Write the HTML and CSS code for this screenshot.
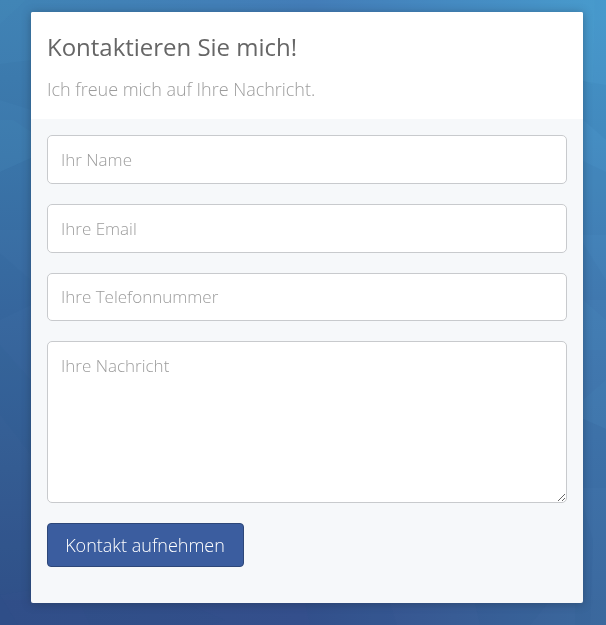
FILE: index.html
```html
<!DOCTYPE html>
<html lang="de">
<head>
<meta charset="utf-8">
<title>Kontakt</title>
<link rel="stylesheet" href="styles.css">
</head>
<body>
<svg class="backdrop" viewBox="0 0 606 625" preserveAspectRatio="none" aria-hidden="true">
  <defs>
    <linearGradient id="left" x1="0" y1="0" x2="0" y2="1">
      <stop offset="0" stop-color="#4083b5"/>
      <stop offset=".25" stop-color="#3c77ab"/>
      <stop offset=".5" stop-color="#38689f"/>
      <stop offset=".75" stop-color="#345c92"/>
      <stop offset="1" stop-color="#304e88"/>
    </linearGradient>
    <linearGradient id="right" x1="0" y1="0" x2="0" y2="1">
      <stop offset="0" stop-color="#4799cc"/>
      <stop offset=".22" stop-color="#458dc2"/>
      <stop offset=".48" stop-color="#427bb2"/>
      <stop offset=".7" stop-color="#3f73aa"/>
      <stop offset="1" stop-color="#3b689e"/>
    </linearGradient>
    <linearGradient id="top">
      <stop offset="0" stop-color="#4083b5"/>
      <stop offset=".5" stop-color="#437db8"/>
      <stop offset="1" stop-color="#4799cc"/>
    </linearGradient>
    <linearGradient id="bottom">
      <stop offset="0" stop-color="#304e88"/>
      <stop offset=".5" stop-color="#344f8c"/>
      <stop offset=".75" stop-color="#385c95"/>
      <stop offset="1" stop-color="#3b699e"/>
    </linearGradient>
  </defs>
  <rect width="303" height="625" fill="url(#left)"/>
  <rect x="303" width="303" height="625" fill="url(#right)"/>
  <rect x="20" width="586" height="20" fill="url(#top)"/>
  <rect y="600" width="606" height="25" fill="url(#bottom)"/>
  <g fill="#1f4f8f" fill-opacity=".06">
    <path d="M0 64 31 60V110L0 100Z"/>
    <path d="M0 172 31 158V230H0Z"/>
    <path d="M0 253 31 280V305L0 320Z"/>
    <path d="M0 345 31 380V455L0 415Z"/>
    <path d="M0 530H31V590L0 595Z"/>
    <path d="M0 595 18 625H0Z"/>
    <path d="M583 81 606 85V140L583 120Z"/>
    <path d="M583 161 606 172V235L583 235Z"/>
    <path d="M583 243 606 280V300H583Z"/>
    <path d="M583 419 606 429V488H583Z"/>
    <path d="M583 505 593 540 590 625H575V600Z"/>
    <path d="M80 603H185L225 620 210 625H90Z"/>
    <path d="M305 603H390L397 625H310Z"/>
    <path d="M475 603H548L530 625H480Z"/>
  </g>
  <g fill="#65c5e5" fill-opacity=".04">
    <path d="M0 0H26L0 24Z"/>
    <path d="M13 120 31 132V158L0 172V120Z"/>
    <path d="M540 0H595L593 85 583 81V12H540Z"/>
    <path d="M606 320V350H583V300Z"/>
    <path d="M606 380V429L583 419V400Z"/>
  </g>
</svg>
<main class="card">
  <header class="card-header">
    <h1>Kontaktieren Sie mich!</h1>
    <p>Ich freue mich auf Ihre Nachricht.</p>
  </header>
  <form class="card-form">
    <input type="text" placeholder="Ihr Name">
    <input type="email" placeholder="Ihre Email">
    <input type="tel" placeholder="Ihre Telefonnummer">
    <textarea placeholder="Ihre Nachricht"></textarea>
    <button type="button">Kontakt aufnehmen</button>
  </form>
</main>
</body>
</html>
```
FILE: styles.css
```css
* {
  box-sizing: border-box;
}

body {
  margin: 0;
  height: 625px;
  overflow: hidden;
  padding: 12px 23px 22px 31px;
  font-family: "Open Sans", sans-serif;
  font-weight: 300;
}

.backdrop {
  position: absolute;
  inset: 0;
  z-index: -1;
  width: 100%;
  height: 100%;
}

/* Own layer, so the text is smoothed in greyscale. */
.card {
  display: flex;
  flex-direction: column;
  height: 591px;
  overflow: hidden;
  border-radius: 2px;
  background: #f6f8fa;
  box-shadow: 0 1px 10px rgba(30, 45, 65, .42);
  will-change: transform;
}

.card-header {
  height: 107px;
  padding: 18px 16px 0;
  background: #fff;
}

h1 {
  margin: 0;
  color: #666;
  font-size: 24px;
  font-weight: 400;
  line-height: 33px;
  letter-spacing: -.02px;
}

.card-header p {
  margin: 14px 0 0;
  color: #9c9c9c;
  font-size: 18px;
  line-height: 25px;
  letter-spacing: -.02px;
}

.card-form {
  display: flex;
  flex-direction: column;
  align-items: flex-start;
  gap: 20px;
  padding: 16px;
}

input,
textarea {
  display: block;
  width: 100%;
  margin: 0;
  border: 1px solid #c8cacd;
  border-radius: 5px;
  background: #fff;
  color: #666;
  font: inherit;
  font-size: 17px;
}

input {
  height: 49px;
  padding: 0 13px;
}

input[type="tel"] {
  height: 48px;
  padding-bottom: 2px;
}

textarea {
  height: 162px;
  padding: 12px 13px;
  line-height: 24px;
  resize: vertical;
}

::placeholder {
  color: #9c9c9c;
  opacity: 1;
}

button {
  width: 197px;
  height: 44px;
  padding: 0 1px 0 0;
  border: 1px solid #2d4779;
  border-radius: 4px;
  background: #3b5d9f;
  color: #fff;
  font: inherit;
  font-size: 18px;
}
```
